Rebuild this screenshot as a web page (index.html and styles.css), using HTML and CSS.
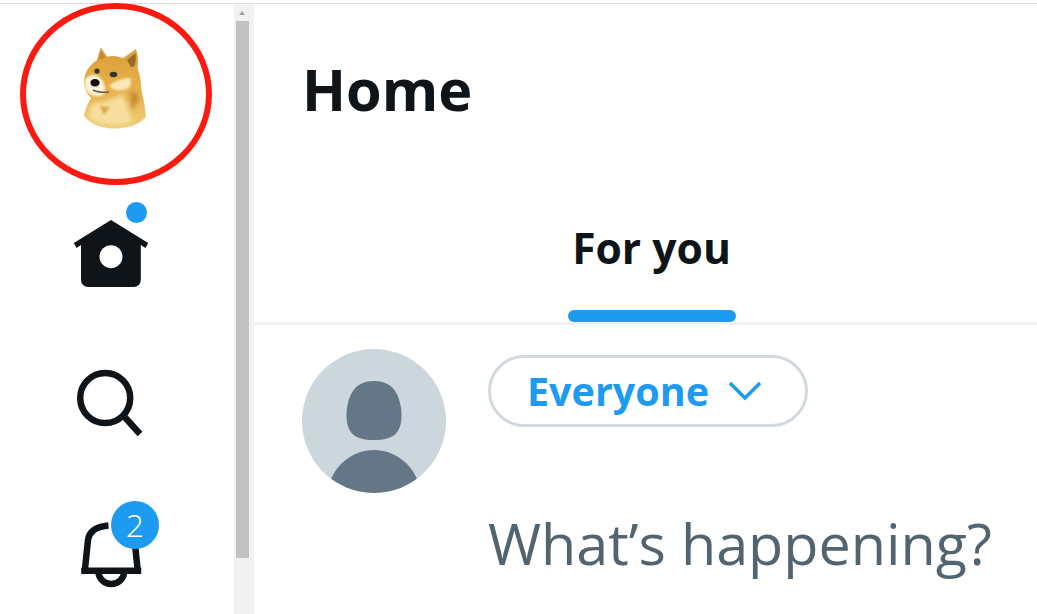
FILE: index.html
```html
<!DOCTYPE html>
<html lang="en">
<head>
    <meta charset="UTF-8">
    <meta name="viewport" content="width=device-width, initial-scale=1.0">
    <title>Home</title>
    <link rel="stylesheet" href="styles.css">
</head>
<body>
    <div class="app">
        <nav class="nav">
            <div class="nav-logo">
                <svg class="doge" width="110" height="110" viewBox="0 0 110 110">
                    <defs>
                        <linearGradient id="fur" x1="0" y1="0" x2="0" y2="1">
                            <stop offset="0" stop-color="#dc9f38"/>
                            <stop offset="0.5" stop-color="#e5b04a"/>
                            <stop offset="1" stop-color="#f0cd78"/>
                        </linearGradient>
                        <filter id="soft"><feGaussianBlur stdDeviation="0.5"/></filter>
                        <filter id="mid"><feGaussianBlur stdDeviation="1.2"/></filter>
                        <filter id="softer"><feGaussianBlur stdDeviation="2"/></filter>
                    </defs>
                    <g filter="url(#soft)">
                        <path d="M40.7 17.3 L47 26.5 Q56 25 63 28 L76 19 Q79 28 77.5 38 Q81 48 81.5 60 Q85 74 86 87 Q76 98 54 98.5 Q34 98 24 86 Q26 76 31 68 Q24 62 24 50 Q25 38 37 30 Z" fill="url(#fur)"/>
                        <path d="M67 30 L75.5 23 Q76.5 30 74.5 36.5 L71 37 Z" fill="#9c6a28"/>
                        <path d="M40.7 20 L45.5 27.5 L38.5 30 Z" fill="#c68a32"/>
                    </g>
                    <g filter="url(#softer)">
                        <path d="M32 74 Q50 72 62 64 Q68 74 72 92 Q56 97 38 93 Q30 90 28 85 Z" fill="#f6df9e"/>
                        <path d="M70 62 Q78 60 79 68 Q76 76 71 80 Z" fill="#c48c34"/>
                    </g>
                    <path d="M40 76 L50 77 L44 85 Z" fill="#dca548" filter="url(#mid)"/>
                    <g filter="url(#mid)">
                        <path d="M49 56 Q58 48 70 48 Q73 56 67 59 Q56 63 49 56 Z" fill="#fbe8b6"/>
                        <path d="M25 50 Q30 43 38 46 Q44 50 45 58 Q46 65 38 66 Q28 66 25 58 Z" fill="#fcf3da"/>
                    </g>
                    <g filter="url(#soft)">
                        <circle cx="37" cy="41" r="2.6" fill="#35332e"/>
                        <ellipse cx="53.5" cy="44.5" rx="3.8" ry="2.8" fill="#35332e"/>
                        <ellipse cx="35" cy="52.7" rx="4.6" ry="3.8" fill="#111"/>
                        <path d="M33 60 Q38 63 49 62" stroke="#6a6152" stroke-width="1.6" fill="none"/>
                    </g>
                </svg>
            </div>
            <a class="nav-item">
                <svg width="100" height="100" viewBox="0 0 100 100">
                    <path d="M50 17 L87.2 40 L84.5 45 L79.8 42 V77 a7 7 0 0 1 -7 7 H27 a7 7 0 0 1 -7 -7 V42 L15.5 45 L12.8 40 Z" fill="#0f1419"/>
                    <circle cx="50" cy="53.7" r="11.5" fill="#fff"/>
                </svg>
                <span class="dot"></span>
            </a>
            <a class="nav-item">
                <svg width="100" height="100" viewBox="0 0 100 100" fill="none" stroke="#0f1419" stroke-width="6.5">
                    <circle cx="44.2" cy="45" r="25"/>
                    <path d="M62.5 62.7 L79 81"/>
                </svg>
            </a>
            <a class="nav-item">
                <svg width="100" height="100" viewBox="0 0 100 100" fill="none" stroke="#0f1419" stroke-width="6.5">
                    <path d="M20.2 67.8 H80.2"/>
                    <path d="M23.8 68 L27 37 Q29 24 47.5 22.5"/>
                    <path d="M76.8 68 L73.5 37"/>
                    <path d="M37.3 68 A13 13 0 0 0 63.3 68"/>
                </svg>
                <span class="badge">2</span>
            </a>
        </nav>

        <div class="scrollbar">
            <div class="scroll-arrow"></div>
            <div class="scroll-thumb"></div>
        </div>

        <main class="main">
            <header class="main-head">
                <h1>Home</h1>
            </header>
            <div class="tabs">
                <div class="tab">
                    <span>For you</span>
                    <i class="tab-line"></i>
                </div>
            </div>
            <section class="compose">
                <svg class="avatar" width="144" height="144" viewBox="0 0 144 144">
                    <defs>
                        <clipPath id="round"><circle cx="72" cy="72" r="72"/></clipPath>
                    </defs>
                    <circle cx="72" cy="72" r="72" fill="#ccd6dd"/>
                    <path d="M72 32 C90 32 98 44 99.5 64 C100 84 92 91 72 91 C52 91 44 84 44.5 64 C46 44 54 32 72 32 Z" fill="#657786"/>
                    <ellipse cx="72" cy="150" rx="47" ry="49" fill="#657786" clip-path="url(#round)"/>
                </svg>
                <div class="compose-body">
                    <button class="audience">
                        <span>Everyone</span>
                        <svg width="32" height="20" viewBox="0 0 32 20" fill="none" stroke="#1d9bf0" stroke-width="3.4">
                            <path d="M1 2 L16 17 L31 2"/>
                        </svg>
                    </button>
                    <div class="prompt">What’s happening?</div>
                </div>
            </section>
        </main>
    </div>

    <svg class="ring" width="196" height="186" viewBox="0 0 196 186">
        <ellipse cx="98" cy="93" rx="93" ry="88" fill="none" stroke="#fb1a10" stroke-width="6"/>
    </svg>
</body>
</html>
```

FILE: styles.css
```css
body{margin: 0;width: 1037px;height: 614px;overflow: hidden;background-color: #fff;color: #0f1419;font-family: "Open Sans", "Noto Sans", sans-serif;position: relative;}

.app{
    display: flex;
    height: 610px;
    border-top: solid 4px #fff;
    position: relative;
}
.app::before{
    content: "";
    position: absolute;
    top: -1px;
    left: 0;
    right: 0;
    height: 1px;
    background-color: #ddd;
}

/* left nav */
.nav{
    width: 221px;
    padding-right: 13px;
    flex-shrink: 0;
    display: flex;
    flex-direction: column;
}
.nav-logo{
    height: 174px;
    flex-shrink: 0;
    display: flex;
    justify-content: center;
    padding: 0 0 12px 9px;
    box-sizing: border-box;
    align-items: center;
}
.nav-item{
    height: 150px;
    flex-shrink: 0;
    display: flex;
    justify-content: center;
    align-items: center;
    position: relative;
}
.dot{
    position: absolute;
    left: 126px;
    top: 24px;
    width: 21px;
    height: 21px;
    border-radius: 50%;
    background-color: #1d9bf0;
}
.badge{
    position: absolute;
    left: 111px;
    top: 23px;
    width: 48px;
    height: 48px;
    border-radius: 50%;
    background-color: #1d9bf0;
    color: #fff;
    font-size: 32px;
    font-weight: 300;
    line-height: 48px;
    text-align: center;
}

/* page scrollbar */
.scrollbar{
    width: 16px;
    flex-shrink: 0;
    background-color: #f1f1f1;
    display: flex;
    flex-direction: column;
    align-items: center;
}
.scroll-arrow{
    height: 17px;
    width: 100%;
    position: relative;
}
.scroll-arrow::after{
    content: "";
    position: absolute;
    left: 5px;
    top: 7px;
    border: solid 3.5px transparent;
    border-top: 0;
    border-bottom: solid 4px #a3a3a3;
}
.scroll-thumb{
    width: 13px;
    height: 537px;
    margin-left: 1px;
    background-color: #c1c1c1;
}

/* main column */
.main{
    flex: 1;
    min-width: 0;
    border-left: solid 4px #eff3f4;
    overflow: hidden;
}
.main-head{
    height: 176px;
    padding: 0 0 6px 48px;
    box-sizing: border-box;
    display: flex;
    align-items: center;
}
.main-head h1{
    margin: 0;
    font-size: 57.6px;
    font-weight: 700;
    line-height: 60px;
}
.tabs{
    height: 145px;
    box-sizing: border-box;
    border-bottom: solid 3px #eff3f4;
    display: flex;
    justify-content: center;
}
.tab{
    width: 168px;
    margin-left: 12px;
    display: flex;
    flex-direction: column;
    align-items: center;
    justify-content: flex-end;
}
.tab span{
    font-size: 42.6px;
    font-weight: 700;
    line-height: 50px;
    white-space: nowrap;
    margin-bottom: 38px;
}
.tab-line{
    display: block;
    width: 168px;
    height: 12px;
    border-radius: 6px;
    background-color: #1d9bf0;
}

.compose{
    display: flex;
    gap: 42px;
    padding: 24px 0 0 48px;
}
.avatar{
    flex-shrink: 0;
}
.compose-body{
    padding-top: 6px;
}
.audience{
    width: 320px;
    height: 72px;
    box-sizing: border-box;
    border: solid 3px #cfd9de;
    border-radius: 36px;
    background-color: #fff;
    padding: 0 0 0 36px;
    display: flex;
    align-items: center;
    gap: 20px;
    color: #1d9bf0;
    font-family: inherit;
    font-size: 39.5px;
    font-weight: 700;
}
.prompt{
    margin-top: 81px;
    font-size: 57.5px;
    line-height: 70px;
    color: #536471;
    white-space: nowrap;
}

/* red annotation drawn over the logo */
.ring{
    position: absolute;
    left: 18px;
    top: 1px;
}
```
